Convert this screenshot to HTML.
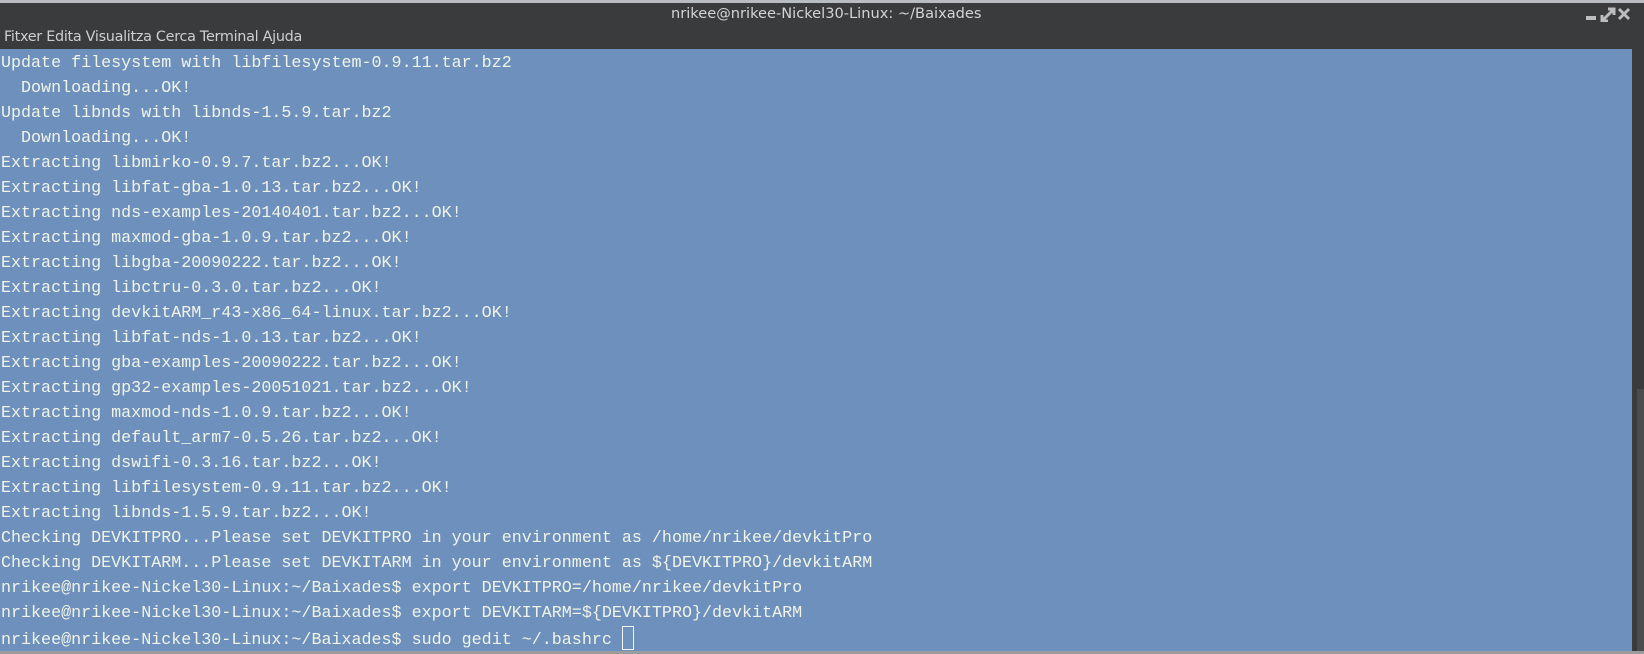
<!DOCTYPE html>
<html><head><meta charset="utf-8"><style>
body{margin:0;width:1644px;height:654px;background:#3a3b3d;overflow:hidden;position:relative;font-family:"DejaVu Sans","Liberation Sans",sans-serif}
#top{position:absolute;left:0;top:0;width:1644px;height:3px;background:#b9bcc0}
#title{position:absolute;left:671px;top:5px;color:#d4d4d4;font-size:14.6px;white-space:nowrap}
#menu{position:absolute;left:4px;top:29px;color:#cfcfcf;font-size:14.4px;letter-spacing:-0.3px;white-space:nowrap}
#term{position:absolute;left:0;top:49px;width:1632px;height:602px;background:#6e90bd}
#sb{position:absolute;left:1637px;top:389px;width:7px;height:262px;background:#4a4c4e}
#bot{position:absolute;left:0;top:651px;width:1644px;height:3px;background:#9a9c9e}
pre{margin:0;position:absolute;left:1px;top:1.5px;font-family:"Liberation Mono","DejaVu Sans Mono",monospace;font-size:16.7px;line-height:25px;color:#f0f4e8}
.cur{display:inline-block;width:10px;height:22px;border:1px solid #f2f4ee;vertical-align:-6px;margin-left:10px}
.ic{position:absolute}
</style></head><body>
<div id="top"></div>
<div id="title">nrikee@nrikee-Nickel30-Linux: ~/Baixades</div>
<svg class="ic" style="left:1584px;top:6px" width="60" height="16" viewBox="0 0 60 16">
<rect x="2" y="10" width="10" height="4" fill="#bdbdbd"/>
<path d="M19 14 L29 4 M24 3 H30 V9 M18 9 V15 H24" stroke="#bdbdbd" stroke-width="3" fill="none"/>
<path d="M35 3 L45 13 M45 3 L35 13" stroke="#bdbdbd" stroke-width="3" fill="none"/>
</svg>
<div id="menu">Fitxer Edita Visualitza Cerca Terminal Ajuda</div>
<div id="term"><pre>Update filesystem with libfilesystem-0.9.11.tar.bz2
  Downloading...OK!
Update libnds with libnds-1.5.9.tar.bz2
  Downloading...OK!
Extracting libmirko-0.9.7.tar.bz2...OK!
Extracting libfat-gba-1.0.13.tar.bz2...OK!
Extracting nds-examples-20140401.tar.bz2...OK!
Extracting maxmod-gba-1.0.9.tar.bz2...OK!
Extracting libgba-20090222.tar.bz2...OK!
Extracting libctru-0.3.0.tar.bz2...OK!
Extracting devkitARM_r43-x86_64-linux.tar.bz2...OK!
Extracting libfat-nds-1.0.13.tar.bz2...OK!
Extracting gba-examples-20090222.tar.bz2...OK!
Extracting gp32-examples-20051021.tar.bz2...OK!
Extracting maxmod-nds-1.0.9.tar.bz2...OK!
Extracting default_arm7-0.5.26.tar.bz2...OK!
Extracting dswifi-0.3.16.tar.bz2...OK!
Extracting libfilesystem-0.9.11.tar.bz2...OK!
Extracting libnds-1.5.9.tar.bz2...OK!
Checking DEVKITPRO...Please set DEVKITPRO in your environment as /home/nrikee/devkitPro
Checking DEVKITARM...Please set DEVKITARM in your environment as ${DEVKITPRO}/devkitARM
nrikee@nrikee-Nickel30-Linux:~/Baixades$ export DEVKITPRO=/home/nrikee/devkitPro
nrikee@nrikee-Nickel30-Linux:~/Baixades$ export DEVKITARM=${DEVKITPRO}/devkitARM
nrikee@nrikee-Nickel30-Linux:~/Baixades$ sudo gedit ~/.bashrc<span class="cur"></span></pre></div>
<div id="sb"></div>
<div id="bot"></div>
</body></html>
